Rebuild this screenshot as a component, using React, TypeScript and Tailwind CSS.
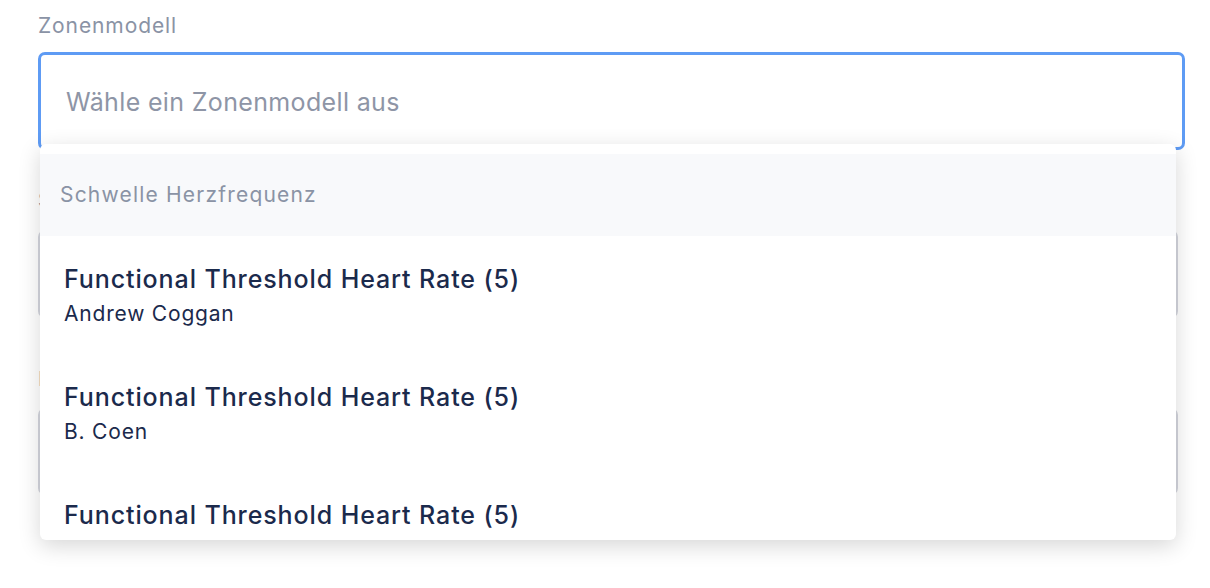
import React from 'react'

const options = [
  { title: 'Functional Threshold Heart Rate (5)', author: 'Andrew Coggan' },
  { title: 'Functional Threshold Heart Rate (5)', author: 'B. Coen' },
  { title: 'Functional Threshold Heart Rate (5)', author: 'Joe Friel' },
]

export default function App() {
  return (
    <div className="relative w-[1210px] h-[588px] overflow-hidden bg-white font-['Inter',sans-serif]">
      {/* form fields */}
      <div className="pl-[38px] pr-[25px] pt-[12px]">
        <label className="block text-[21px] leading-[28px] tracking-[0.9px] text-[#8a93a5]">Zonenmodell</label>
        <div className="mt-[12px] h-[98px] border-[3px] border-[#5e9bf4] rounded-[7px] flex items-center pl-[25px] pt-[3px]">
          <span className="text-[25px] tracking-[0.35px] text-[#8e95a6]">Wähle ein Zonenmodell aus</span>
        </div>

        <div className="w-[1140px]">
          <label className="block mt-[36px] text-[20px] leading-[28px] text-[#8a93a5]">Schwellenwert</label>
          <div className="mt-[16px] h-[88px] border-2 border-[#d4d6de] rounded-[7px]" />
          <label className="block mt-[47px] text-[20px] leading-[28px] text-[#8a93a5]">Maximalwert</label>
          <div className="mt-[15px] h-[87px] border-2 border-[#d4d6de] rounded-[7px]" />
        </div>
      </div>

      {/* dropdown */}
      <div className="absolute left-[40px] top-[144px] w-[1136px] h-[396px] rounded-[6px] bg-white overflow-hidden shadow-[0_6px_22px_rgba(0,0,0,0.16)]">
        <div className="pt-[10px]">
          <div className="h-[82px] bg-[#f8f9fb] flex items-center pl-[20px]">
            <span className="text-[21px] tracking-[1.2px] text-[#8a93a5]">Schwelle Herzfrequenz</span>
          </div>
          {options.map((o, i) => (
            <div key={i} className="pl-[24px] pt-[28px] pb-[26px]">
              <div className="text-[25px] leading-[30px] tracking-[0.9px] font-medium text-[#1b2a4c]">{o.title}</div>
              <div className="mt-[6px] text-[21px] leading-[28px] tracking-[0.8px] text-[#1b2a4c]">{o.author}</div>
            </div>
          ))}
        </div>
      </div>
    </div>
  )
}
